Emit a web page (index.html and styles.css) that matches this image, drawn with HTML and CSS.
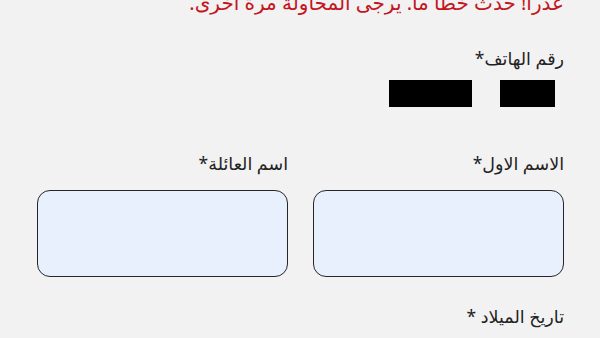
FILE: index.html
```html
<!DOCTYPE html>
<html lang="ar" dir="rtl">
<head>
  <meta charset="UTF-8">
  <meta name="viewport" content="width=device-width, initial-scale=1.0">
  <title>Form</title>
  <link rel="stylesheet" href="styles.css">
</head>
<body>
  <div class="wrapper">
    <p class="error">عذراً! حدث خطأ ما. يرجى المحاولة مرة أخرى.</p>
    <div class="field">
      <label>رقم الهاتف*</label>
      <div class="phone">
        <span class="redact -code"></span>
        <span class="redact -number"></span>
      </div>
    </div>
    <div class="row">
      <div class="field">
        <label>الاسم الاول*</label>
        <input class="input" type="text">
      </div>
      <div class="field">
        <label>اسم العائلة*</label>
        <input class="input" type="text">
      </div>
    </div>
    <div class="field">
      <label>تاريخ الميلاد *</label>
    </div>
  </div>
</body>
</html>
```
FILE: styles.css
```css
*, *::before, *::after {
  box-sizing: border-box;
}
body {
  margin: 0;
  background: #f2f2f2;
  font-family: "Noto Sans", "DejaVu Sans", sans-serif;
  color: #222;
}
.wrapper {
  padding: 0 36px 0 37px;
}
.error {
  margin: -12px 0 0;
  font-size: 20px;
  line-height: 30px;
  color: #c3161f;
}
.field {
  display: flex;
  flex-direction: column;
  align-items: flex-start;
}
.field > label {
  font-size: 17.5px;
  line-height: 24px;
}
.wrapper > .field:nth-of-type(1) {
  margin-top: 28px;
}
.phone {
  display: flex;
  gap: 28px;
  margin-top: 10px;
  padding-right: 9px;
}
.redact {
  display: block;
  height: 27px;
  background: #000;
}
.redact.-code {
  width: 55px;
}
.redact.-number {
  width: 83px;
}
.row {
  display: flex;
  gap: 25px;
  margin-top: 44px;
}
.row > .field {
  flex: 1;
}
.input {
  width: 100%;
  height: 87px;
  margin-top: 15px;
  border: 1.5px solid #262626;
  border-radius: 13px;
  background: #e8f0fe;
}
.wrapper > .field:last-child {
  margin-top: 27px;
}
```
